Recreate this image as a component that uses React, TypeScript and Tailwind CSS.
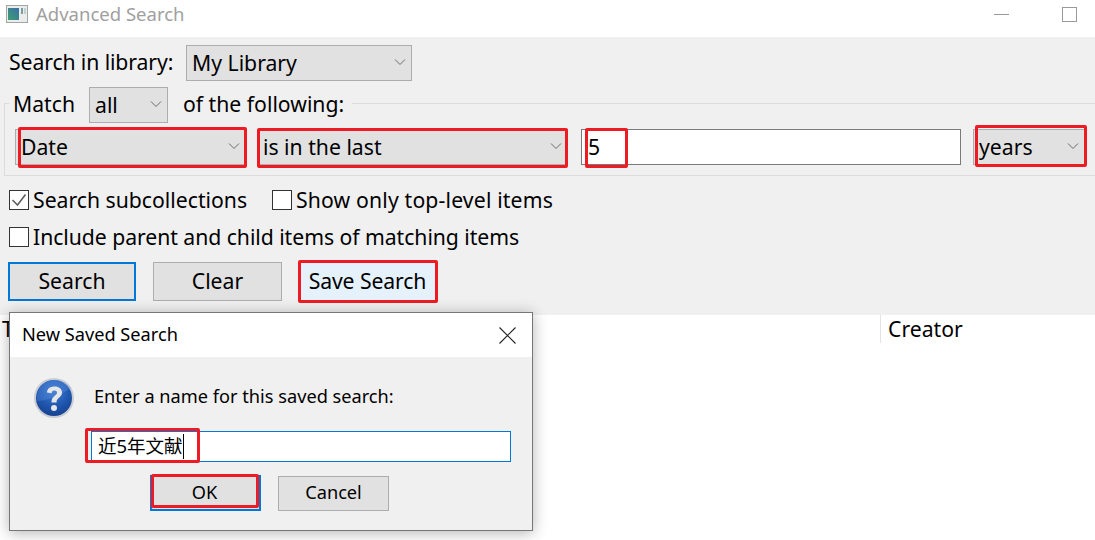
const font = '"Noto Sans", "Noto Sans CJK SC", sans-serif';

function Red({ className }: { className: string }) {
  return <span className={`absolute pointer-events-none border-[3px] border-[#ed1c24] rounded-[2px] ${className}`} />;
}

function Chevron() {
  return (
    <svg width="12" height="8" viewBox="0 0 12 8" className="shrink-0 -mt-[3px]">
      <path d="M1 1.5 L6 6.5 L11 1.5" fill="none" stroke="#6a6a6a" strokeWidth="1" />
    </svg>
  );
}

function Select({ label, className, children }: { label: string; className: string; children?: React.ReactNode }) {
  return (
    <div className={`relative h-[36px] flex items-center justify-between border border-[#adadad] bg-[#e1e1e1] pl-[5px] pr-[5px] ${className}`}>
      <span>{label}</span>
      <Chevron />
      {children}
    </div>
  );
}

function Check({ checked, label, className, labelClass }: { checked?: boolean; label: string; className?: string; labelClass?: string }) {
  return (
    <div className={`flex items-center gap-[4px] ${className ?? ''}`}>
      <span className="w-[20px] h-[20px] border border-[#333] bg-white flex items-center justify-center shrink-0">
        {checked && (
          <svg width="16" height="14" viewBox="0 0 16 14">
            <path d="M1.5 7 L6.5 12 L14.5 1.5" fill="none" stroke="#5f5f5f" strokeWidth="1.6" />
          </svg>
        )}
      </span>
      <span className={labelClass}>{label}</span>
    </div>
  );
}

function QuestionIcon() {
  return (
    <svg width="42" height="42" viewBox="0 0 42 42">
      <defs>
        <radialGradient id="q" cx="50%" cy="30%" r="75%">
          <stop offset="0%" stopColor="#3f7fd8" />
          <stop offset="60%" stopColor="#1e55ad" />
          <stop offset="100%" stopColor="#173f8c" />
        </radialGradient>
      </defs>
      <circle cx="21" cy="21" r="20" fill="#c9ccd2" />
      <circle cx="21" cy="21" r="18" fill="url(#q)" />
      <path d="M4 24 C14 24 28 18 38 11 C33 5 27 3 21 3 C11 3 3 11 4 24 Z" fill="#5c8fdc" opacity="0.35" />
      <path d="M14 15.5 C14 11.5 17.5 9.5 21.5 9.5 C26 9.5 29 12 29 15.5 C29 20.5 23.5 20.5 23.5 25.5 L18.5 25.5 C18.5 19 24 18.5 24 15.8 C24 14.3 23 13.5 21.3 13.5 C19.5 13.5 18.7 14.6 18.7 16.3 Z" fill="#e6e6e6" />
      <circle cx="21" cy="31" r="3" fill="#e6e6e6" />
    </svg>
  );
}

function AppIcon() {
  return (
    <svg width="22" height="18" viewBox="0 0 22 18">
      <defs>
        <linearGradient id="a" x1="0" y1="1" x2="1" y2="0">
          <stop offset="0%" stopColor="#3f9f70" />
          <stop offset="100%" stopColor="#3a6fa8" />
        </linearGradient>
      </defs>
      <rect x="0.5" y="0.5" width="21" height="17" fill="#ececec" stroke="#a0a5a6" />
      <rect x="2" y="3" width="11" height="12" fill="url(#a)" />
      <rect x="15" y="3" width="2" height="6" fill="#7a9f9a" />
      <rect x="18" y="3" width="2" height="6" fill="#c0d0ce" />
    </svg>
  );
}

export default function App() {
  return (
    <div className="relative w-[1095px] h-[540px] overflow-hidden bg-white text-[21.2px] leading-none text-black" style={{ fontFamily: font }}>
      <div className="h-[37px] flex items-center pl-[6px] pr-[18px] pb-[9px]">
        <AppIcon />
        <span className="ml-[8px] text-[18.5px] text-[#a0a0a0]">Advanced Search</span>
        <span className="ml-auto w-[15px] h-px bg-[#9a9a9a]" />
        <span className="ml-[53px] w-[15px] h-[15px] border border-[#9a9a9a]" />
      </div>

      <div className="h-[278px] bg-[#f0f0f0]">
        <div className="pt-[8px] pl-[9px] flex items-center">
          <span className="w-[177px] -mt-[2px] tracking-[-0.1px]">Search in library:</span>
          <Select label="My Library" className="w-[226px]" />
        </div>

        <div className="ml-[4px] mt-[22px] h-[73px] border-t border-l border-b border-[#dcdcdc]">
          <div className="-mt-[17px] ml-[4px] w-fit flex items-center bg-[#f0f0f0] px-[4px] h-[36px]">
            <span className="w-[76px] -mt-[2px]">Match</span>
            <Select label="all" className="w-[79px]" />
            <span className="ml-[15px] pr-[4px] -mt-[2px]">of the following:</span>
          </div>
          <div className="mt-[6px] pl-[10px] flex items-center">
            <Select label="Date" className="w-[231px]">
              <Red className="left-[2px] -top-[3px] w-[229px] h-[41px]" />
            </Select>
            <Select label="is in the last" className="ml-[11px] w-[311px]">
              <Red className="-left-px -top-[2px] w-[311px] h-[40px]" />
            </Select>
            <div className="relative ml-[13px] w-[380px] h-[36px] flex items-center border border-[#7a7a7a] bg-white pl-[6px]">
              <span>5</span>
              <Red className="left-[3px] -top-[2px] w-[43px] h-[40px]" />
            </div>
            <Select label="years" className="ml-[12px] w-[112px]">
              <Red className="left-px -top-[5px] w-[112px] h-[42px]" />
            </Select>
          </div>
        </div>

        <div className="mt-[14px] pl-[9px] flex items-center h-[20px]">
          <Check checked label="Search subcollections" className="w-[263px]" />
          <Check label="Show only top-level items" labelClass="tracking-[0.16px]" />
        </div>
        <Check label="Include parent and child items of matching items" className="mt-[17px] ml-[9px] h-[20px]" labelClass="tracking-[-0.04px]" />

        <div className="mt-[15px] pl-[8px] flex items-start">
          <button className="w-[128px] h-[39px] border-2 border-[#0078d7] bg-[#e1e1e1] pb-[2px]">Search</button>
          <button className="ml-[17px] w-[129px] h-[39px] border border-[#adadad] bg-[#e1e1e1] pb-[2px]">Clear</button>
          <button className="relative ml-[17px] w-[137px] h-[39px] border border-[#0078d7] bg-[#e5f1fb] pb-[2px] tracking-[-0.1px]">
            Save Search
            <Red className="-left-[2px] -top-[3px] w-[140px] h-[43px]" />
          </button>
        </div>
      </div>

      <div className="h-[28px] flex items-stretch pl-[2px]">
        <span className="w-[878px] flex items-center">T</span>
        <span className="border-l border-[#e3e3e3] pl-[7px] flex items-center">Creator</span>
      </div>

      <div className="absolute left-[9px] top-[312px] w-[524px] h-[219px] border border-[#767676] bg-[#f0f0f0] shadow-[0_2px_14px_rgba(0,0,0,0.3)] text-[18.2px]">
        <div className="h-[44px] bg-white flex items-center justify-between pl-[12px] pr-[16px]">
          <span className="-mt-[2px]">New Saved Search</span>
          <svg width="17" height="17" viewBox="0 0 17 17">
            <path d="M0.5 0.5 L16.5 16.5 M16.5 0.5 L0.5 16.5" stroke="#222" strokeWidth="1.1" fill="none" />
          </svg>
        </div>
        <div className="mt-[20px] ml-[23px] flex items-center">
          <QuestionIcon />
          <span className="ml-[19px] -mt-[3px]">Enter a name for this saved search:</span>
        </div>
        <div className="relative mt-[12px] ml-[81px] w-[420px] h-[31px] border border-[#0078d7] bg-white flex items-center pl-[6px] text-[18.5px]">
          <span>近5年文献</span>
          <span className="w-px h-[25px] bg-black" />
          <Red className="-left-[7px] -top-[4px] w-[115px] h-[35px]" />
        </div>
        <div className="mt-[13px] ml-[140px] flex items-start">
          <button className="relative w-[111px] h-[36px] border-2 border-[#0078d7] bg-[#e1e1e1] pb-[2px] pr-[2px]">
            OK
            <Red className="-left-[1px] -top-[3px] w-[108px] h-[34px]" />
          </button>
          <button className="mt-px ml-[17px] w-[111px] h-[35px] border border-[#adadad] bg-[#e1e1e1] pb-[2px]">Cancel</button>
        </div>
      </div>
    </div>
  );
}
